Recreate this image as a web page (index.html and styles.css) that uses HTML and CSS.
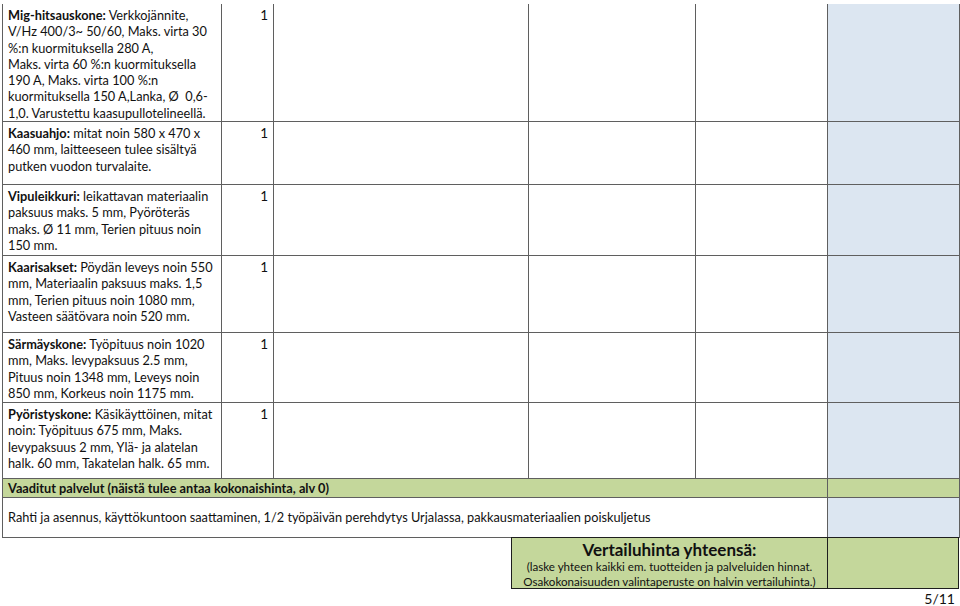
FILE: index.html
```html
<!DOCTYPE html>
<html lang="fi">
<head>
<meta charset="utf-8">
<title>Tarjouslomake 5/11</title>
<link rel="stylesheet" href="styles.css">
</head>
<body>
<div class="page">
  <table class="sheet">
    <colgroup>
      <col class="c-desc"><col class="c-qty"><col class="c-a"><col class="c-b"><col class="c-c"><col class="c-d">
    </colgroup>
    <tbody>
      <tr class="r1">
        <td class="desc"><b>Mig-hitsauskone:</b> Verkkojännite,<br>V/Hz 400/3~ 50/60, Maks. virta 30<br>%:n kuormituksella 280 A,<br>Maks. virta 60 %:n kuormituksella<br>190 A, Maks. virta 100 %:n<br>kuormituksella 150 A,Lanka, Ø&nbsp; 0,6-<br>1,0. Varustettu kaasupullotelineellä.</td>
        <td class="qty">1</td><td></td><td></td><td></td><td class="blue"></td>
      </tr>
      <tr class="r2">
        <td class="desc"><b>Kaasuahjo:</b> mitat noin 580 x 470 x<br>460 mm, laitteeseen tulee sisältyä<br>putken vuodon turvalaite.</td>
        <td class="qty">1</td><td></td><td></td><td></td><td class="blue"></td>
      </tr>
      <tr class="r3">
        <td class="desc"><b>Vipuleikkuri:</b> leikattavan materiaalin<br>paksuus maks. 5 mm, Pyöröteräs<br>maks. Ø 11 mm, Terien pituus noin<br>150 mm.</td>
        <td class="qty">1</td><td></td><td></td><td></td><td class="blue"></td>
      </tr>
      <tr class="r4">
        <td class="desc"><b>Kaarisakset:</b> Pöydän leveys noin 550<br>mm, Materiaalin paksuus maks. 1,5<br>mm, Terien pituus noin 1080 mm,<br>Vasteen säätövara noin 520 mm.</td>
        <td class="qty">1</td><td></td><td></td><td></td><td class="blue"></td>
      </tr>
      <tr class="r5">
        <td class="desc"><b>Särmäyskone:</b> Työpituus noin 1020<br>mm, Maks. levypaksuus 2.5 mm,<br>Pituus noin 1348 mm, Leveys noin<br>850 mm, Korkeus noin 1175 mm.</td>
        <td class="qty">1</td><td></td><td></td><td></td><td class="blue"></td>
      </tr>
      <tr class="r6">
        <td class="desc"><b>Pyöristyskone:</b> Käsikäyttöinen, mitat<br>noin: Työpituus 675 mm, Maks.<br>levypaksuus 2 mm, Ylä- ja alatelan<br>halk. 60 mm, Takatelan halk. 65 mm.</td>
        <td class="qty">1</td><td></td><td></td><td></td><td class="blue"></td>
      </tr>
      <tr class="r-head">
        <td class="green section" colspan="5">Vaaditut palvelut (näistä tulee antaa kokonaishinta, alv 0)</td>
        <td class="green"></td>
      </tr>
      <tr class="r-serv">
        <td class="service" colspan="5">Rahti ja asennus, käyttökuntoon saattaminen, 1/2 työpäivän perehdytys Urjalassa, pakkausmateriaalien poiskuljetus</td>
        <td class="blue"></td>
      </tr>
    </tbody>
  </table>
  <div class="totals">
    <div class="total-box">
      <div class="total-title">Vertailuhinta yhteensä:</div>
      <div class="total-note">(laske yhteen kaikki em. tuotteiden ja palveluiden hinnat.<br>Osakokonaisuuden valintaperuste on halvin vertailuhinta.)</div>
    </div>
    <div class="total-value"></div>
  </div>
  <div class="page-no">5/11</div>
</div>
</body>
</html>
```
FILE: styles.css
```css
html, body {
  margin: 0;
  padding: 0;
  background: #ffffff;
}

body {
  font-family: Lato, "Liberation Sans", sans-serif;
  color: #111111;
}

.page {
  width: 960px;
  padding: 4px 1px 0 2px;
  box-sizing: border-box;
}

.sheet {
  border-collapse: collapse;
  table-layout: fixed;
  width: 957px;
  border-top: hidden;
}

.c-desc { width: 219px; }
.c-qty { width: 52px; }
.c-a { width: 255px; }
.c-b { width: 167px; }
.c-c { width: 132px; }
.c-d { width: 132px; }

.sheet td {
  border: 1px solid #5f5f5f;
  padding: 0;
  vertical-align: top;
  font-size: 12.75px;
  line-height: 16.3px;
}

.sheet td.desc {
  padding: 3px 0 0 5px;
  white-space: nowrap;
  overflow: hidden;
}

.sheet td.qty {
  text-align: right;
  padding: 3px 5px 0 0;
  font-size: 13.5px;
}

.sheet td.blue {
  background: #dce6f1;
}

.sheet td.green {
  background: #c4d79b;
}

.sheet td.section {
  font-weight: bold;
  padding: 1px 0 0 5px;
  vertical-align: middle;
  white-space: nowrap;
}

.sheet td.service {
  padding: 0 0 0 5px;
  vertical-align: middle;
  white-space: nowrap;
}

.r1 { height: 113px; }
.r2 { height: 63px; }
.r3 { height: 71px; }
.r4 { height: 77px; }
.r5 { height: 70px; }
.r6 { height: 76px; }
.r-head { height: 19px; }
.r-serv { height: 40px; }

.totals {
  display: flex;
  justify-content: flex-end;
  margin-top: -1px;
}

.total-box {
  width: 316px;
  height: 52px;
  box-sizing: border-box;
  background: #c4d79b;
  border: 1px solid #1e1e1e;
  border-right: none;
  text-align: center;
  color: #111;
  white-space: nowrap;
}

.total-value {
  width: 132px;
  height: 52px;
  box-sizing: border-box;
  background: #c4d79b;
  border: 1px solid #1e1e1e;
}

.total-title {
  font-weight: bold;
  font-size: 17px;
  line-height: 20px;
  margin-top: 2px;
}

.total-note {
  font-size: 11.6px;
  line-height: 14.5px;
}

.page-no {
  text-align: right;
  font-size: 14px;
  line-height: 14px;
  padding-right: 4px;
  margin-top: 3px;
}
```
